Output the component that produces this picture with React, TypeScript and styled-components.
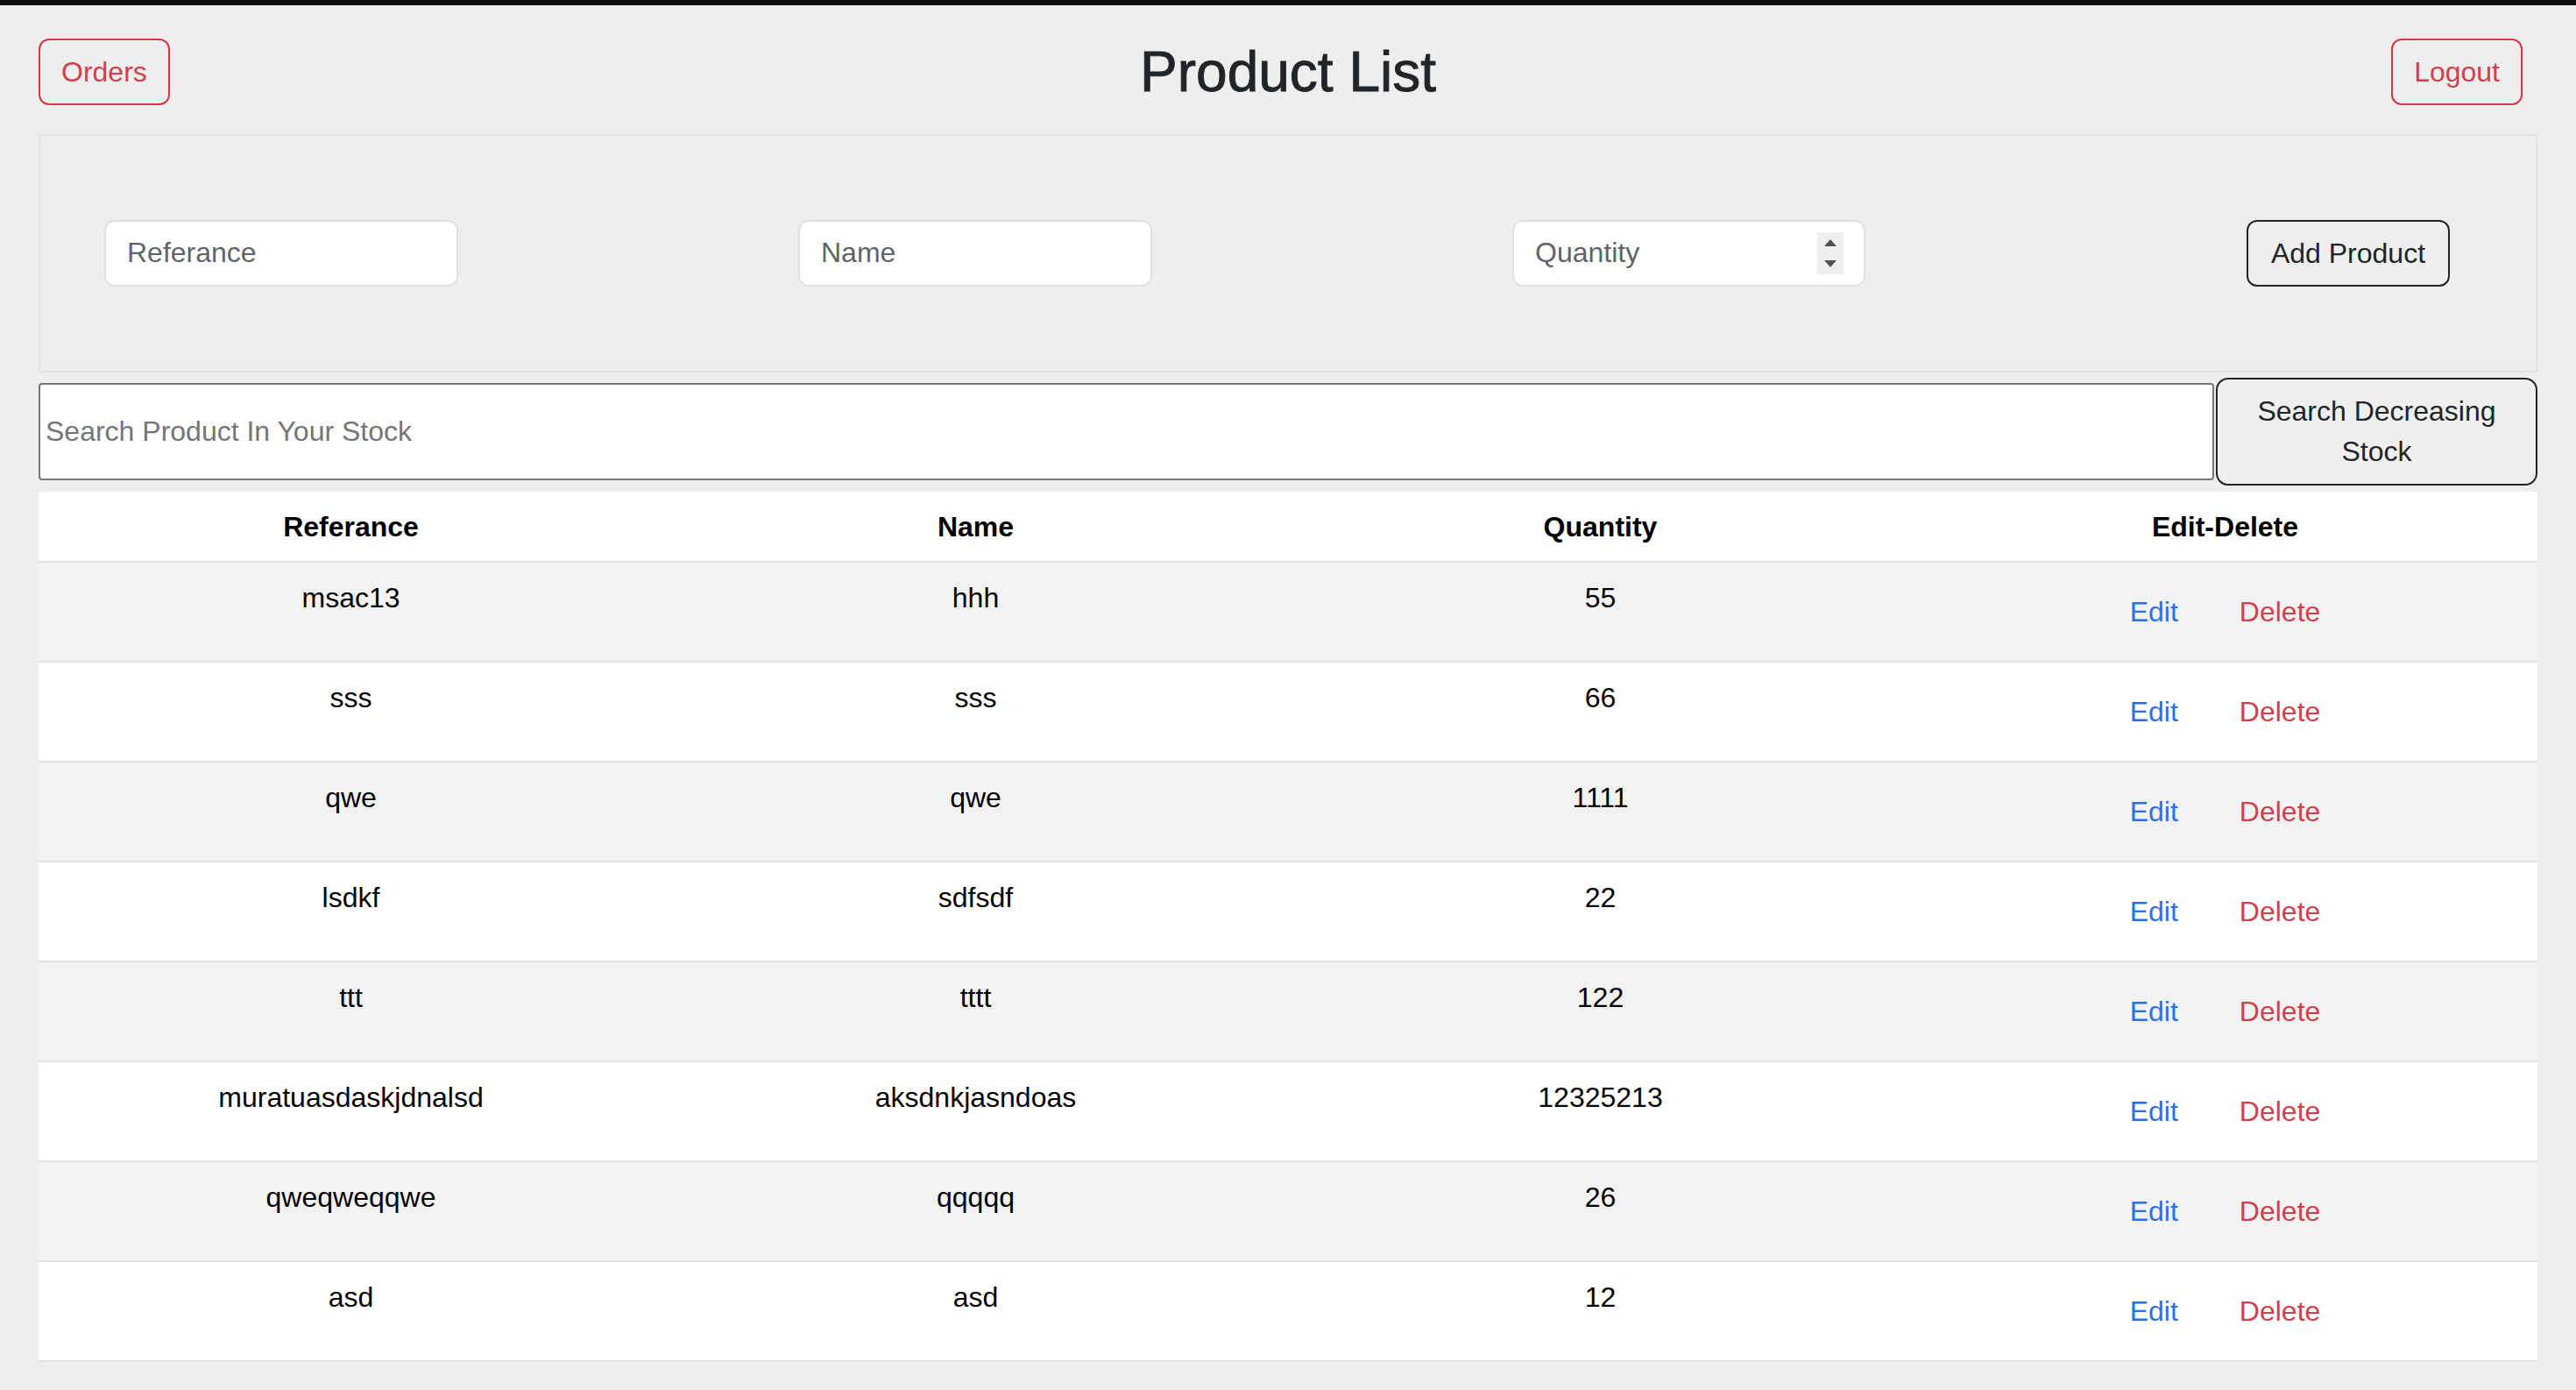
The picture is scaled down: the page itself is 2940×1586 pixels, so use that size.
import React from "react";
import styled, { createGlobalStyle } from "styled-components";

const GlobalStyle = createGlobalStyle`
  html, body {
    margin: 0;
    padding: 0;
    background: #eeeeee;
  }
  body {
    font-family: "Liberation Sans", Arial, sans-serif;
    font-size: 32px;
    color: #212529;
  }
  * { box-sizing: border-box; }
`;

const TopBar = styled.div`
  height: 6px;
  background: #0d0d0d;
`;

const Page = styled.main`
  padding: 0 44px;
`;

const Header = styled.header`
  display: grid;
  grid-template-columns: 1fr auto 1fr;
  align-items: center;
  padding-top: 38px;
  margin-bottom: 32px;
`;

const Title = styled.h1`
  margin: 0;
  font-size: 64px;
  line-height: 1.2;
  font-weight: 500;
  color: #212529;
  -webkit-text-stroke: 0.9px #212529;
`;

const OutlineDanger = styled.button<{ $end?: boolean }>`
  justify-self: ${(p) => (p.$end ? "end" : "start")};
  margin-right: ${(p) => (p.$end ? "17px" : "0")};
  font-family: inherit;
  font-size: 32px;
  line-height: 48px;
  padding: 12px 24px;
  border: 2px solid #dc3545;
  border-radius: 12px;
  background: transparent;
  color: #d1404b;
  cursor: pointer;
`;

const FormPanel = styled.section`
  display: flex;
  align-items: center;
  border: 2px solid #dfe2e6;
  padding: 96px 0 96px 73px;
`;

const fieldBox = `
  height: 76px;
  width: 404px;
  border: 2px solid #dee2e6;
  border-radius: 12px;
  background: #ffffff;
`;

const TextField = styled.input<{ $lead: number }>`
  ${fieldBox}
  margin-left: ${(p) => p.$lead}px;
  padding: 0 24px;
  font-family: inherit;
  font-size: 32px;
  color: #212529;
  outline: none;
  &::placeholder {
    color: #5f6469;
  }
`;

const NumberBox = styled.div<{ $lead: number }>`
  ${fieldBox}
  width: 403px;
  margin-left: ${(p) => p.$lead}px;
  display: flex;
  align-items: center;
  padding: 0 23px 0 24px;
`;

const BareInput = styled.input`
  flex: 1;
  min-width: 0;
  border: none;
  outline: none;
  background: transparent;
  padding: 0;
  font-family: inherit;
  font-size: 32px;
  color: #212529;
  &::placeholder {
    color: #5f6469;
  }
`;

const Spinner = styled.span`
  width: 30px;
  height: 48px;
  background: #efefef;
  display: flex;
  flex-direction: column;
  align-items: center;
  justify-content: space-between;
  padding: 8px 0;
`;

const OutlineDark = styled.button<{ $lead: number }>`
  margin-left: ${(p) => p.$lead}px;
  width: 232px;
  height: 76px;
  font-family: inherit;
  font-size: 32px;
  line-height: 48px;
  padding: 12px 24px;
  border: 2px solid #212529;
  border-radius: 12px;
  background: transparent;
  color: #212529;
  cursor: pointer;
`;

const SearchRow = styled.div`
  display: flex;
  align-items: center;
  gap: 2px;
  margin-top: 6px;
`;

const SearchInput = styled.input`
  flex: 1;
  height: 111px;
  border: 2px solid #767676;
  border-radius: 4px;
  background: #ffffff;
  padding: 0 6px;
  font-family: inherit;
  font-size: 32px;
  outline: none;
  &::placeholder {
    color: #757575;
  }
`;

const SearchButton = styled.button`
  width: 367px;
  height: 123px;
  border: 2px solid #232323;
  border-radius: 14px;
  background: #efefef;
  padding: 13px 12px;
  font-family: inherit;
  font-size: 32px;
  line-height: 46px;
  color: #212529;
  text-align: center;
  cursor: pointer;
`;

const Table = styled.div`
  margin-top: 7px;
  background: #ffffff;
`;

const Row = styled.div<{ $striped?: boolean; $head?: boolean }>`
  display: grid;
  grid-template-columns: repeat(4, 1fr);
  height: ${(p) => (p.$head ? "81px" : "114px")};
  border-bottom: 2px solid #dee2e6;
  background: ${(p) => (p.$striped ? "#f2f2f2" : "#ffffff")};
`;

const HeadCell = styled.div`
  padding: 16px;
  text-align: center;
  font-weight: 700;
  font-size: 32px;
  line-height: 48px;
  color: #000000;
`;

const Cell = styled.div`
  padding: 16px;
  text-align: center;
  font-size: 32px;
  line-height: 48px;
  color: #000000;
`;

const ActionCell = styled.div`
  padding: 16px;
  display: flex;
  justify-content: center;
  align-items: flex-start;
  gap: 18px;
`;

const LinkButton = styled.button<{ $danger?: boolean }>`
  font-family: inherit;
  font-size: 32px;
  line-height: 48px;
  padding: 12px 24px;
  margin-top: 2px;
  border: 2px solid transparent;
  background: transparent;
  color: ${(p) => (p.$danger ? "#d1404b" : "#2f6fe6")};
  cursor: pointer;
`;

const products = [
  { ref: "msac13", name: "hhh", qty: "55" },
  { ref: "sss", name: "sss", qty: "66" },
  { ref: "qwe", name: "qwe", qty: "1111" },
  { ref: "lsdkf", name: "sdfsdf", qty: "22" },
  { ref: "ttt", name: "tttt", qty: "122" },
  { ref: "muratuasdaskjdnalsd", name: "aksdnkjasndoas", qty: "12325213" },
  { ref: "qweqweqqwe", name: "qqqqq", qty: "26" },
  { ref: "asd", name: "asd", qty: "12" },
];

export default function App() {
  return (
    <>
      <GlobalStyle />
      <TopBar />
      <Page>
        <Header>
          <OutlineDanger>Orders</OutlineDanger>
          <Title>Product List</Title>
          <OutlineDanger $end>Logout</OutlineDanger>
        </Header>

        <FormPanel>
          <TextField $lead={0} placeholder="Referance" />
          <TextField $lead={388} placeholder="Name" />
          <NumberBox $lead={411}>
            <BareInput placeholder="Quantity" />
            <Spinner>
              <svg width="14" height="8" viewBox="0 0 14 8">
                <path d="M7 0 L14 8 L0 8 Z" fill="#505050" />
              </svg>
              <svg width="14" height="8" viewBox="0 0 14 8">
                <path d="M0 0 L14 0 L7 8 Z" fill="#505050" />
              </svg>
            </Spinner>
          </NumberBox>
          <OutlineDark $lead={435}>Add Product</OutlineDark>
        </FormPanel>

        <SearchRow>
          <SearchInput placeholder="Search Product In Your Stock" />
          <SearchButton>Search Decreasing Stock</SearchButton>
        </SearchRow>

        <Table>
          <Row $head>
            <HeadCell>Referance</HeadCell>
            <HeadCell>Name</HeadCell>
            <HeadCell>Quantity</HeadCell>
            <HeadCell>Edit-Delete</HeadCell>
          </Row>
          {products.map((p, i) => (
            <Row key={i} $striped={i % 2 === 0}>
              <Cell>{p.ref}</Cell>
              <Cell>{p.name}</Cell>
              <Cell>{p.qty}</Cell>
              <ActionCell>
                <LinkButton>Edit</LinkButton>
                <LinkButton $danger>Delete</LinkButton>
              </ActionCell>
            </Row>
          ))}
        </Table>
      </Page>
    </>
  );
}
